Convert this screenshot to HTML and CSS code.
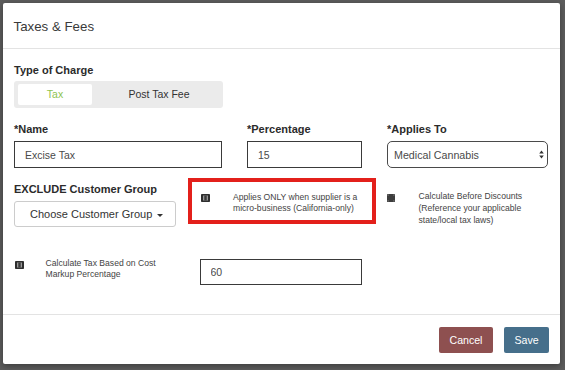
FILE: index.html
```html
<!DOCTYPE html>
<html>
<head>
<meta charset="utf-8">
<link rel="stylesheet" href="styles.css">
</head>
<body>
<div class="modal">
  <div class="modal-header">
    <h4 class="title">Taxes &amp; Fees</h4>
  </div>
  <div class="modal-body">
    <div class="label">Type of Charge</div>
    <div class="seg">
      <span class="seg-item active">Tax</span>
      <span class="seg-item other">Post Tax Fee</span>
    </div>

    <div class="fields">
      <div class="field f-name">
        <div class="label">*Name</div>
        <input class="text-input" type="text" value="Excise Tax">
      </div>
      <div class="field f-pct">
        <div class="label">*Percentage</div>
        <input class="text-input" type="text" value="15">
      </div>
      <div class="field f-applies">
        <div class="label">*Applies To</div>
        <div class="select">
          <span>Medical Cannabis</span>
          <svg class="updown" width="5" height="9" viewBox="0 0 5 9"><path d="M2.5 0.5 L4.8 3.6 L0.2 3.6 Z M0.2 5.4 L4.8 5.4 L2.5 8.5 Z" fill="#333"/></svg>
        </div>
      </div>
    </div>

    <div class="options">
      <div class="exclude">
        <div class="label">EXCLUDE Customer Group</div>
        <button class="dropdown">Choose Customer Group <span class="caret"></span></button>
      </div>
      <div class="highlight">
        <svg class="cb" width="9" height="8" viewBox="0 0 9 8"><rect x="0" y="0" width="9" height="8" rx="0.8" fill="#2e2e2e"/><rect x="2" y="1.5" width="5" height="5" fill="#9a9a9a"/><rect x="3.3" y="1.5" width="2.4" height="5" fill="#3a3a3a"/></svg>
        <span class="small-text">Applies ONLY when supplier is a<br>micro-business (California-only)</span>
      </div>
      <div class="opt">
        <svg class="cb cb-filled" width="8" height="8" viewBox="0 0 8 8"><rect x="0" y="0" width="8" height="8" rx="0.6" fill="#3d3d3d"/><rect x="0.6" y="0.6" width="1" height="1" fill="#9a9a9a"/><rect x="6.4" y="0.6" width="1" height="1" fill="#9a9a9a"/><rect x="0.6" y="6.4" width="1" height="1" fill="#9a9a9a"/><rect x="6.4" y="6.4" width="1" height="1" fill="#9a9a9a"/></svg>
        <span class="small-text">Calculate Before Discounts<br>(Reference your applicable<br>state/local tax laws)</span>
      </div>
    </div>

    <div class="markup">
      <svg class="cb" width="9" height="8" viewBox="0 0 9 8"><rect x="0" y="0" width="9" height="8" rx="0.8" fill="#2e2e2e"/><rect x="2" y="1.5" width="5" height="5" fill="#9a9a9a"/><rect x="3.3" y="1.5" width="2.4" height="5" fill="#3a3a3a"/></svg>
      <span class="small-text markup-text">Calculate Tax Based on Cost<br>Markup Percentage</span>
      <input class="text-input markup-input" type="text" value="60">
    </div>
  </div>
  <div class="modal-footer">
    <button class="btn cancel">Cancel</button>
    <button class="btn save">Save</button>
  </div>
</div>
</body>
</html>
```

FILE: styles.css
```css
html, body {
  margin: 0;
  padding: 0;
}
body {
  background: #5c5c5c;
  font-family: "Liberation Sans", Arial, sans-serif;
  color: #333;
  width: 565px;
  height: 370px;
  overflow: hidden;
}
.modal {
  margin: 3px 0 0 3px;
  width: 557px;
  height: 361px;
  background: #fff;
  display: flex;
  flex-direction: column;
  border-radius: 2px;
  box-shadow: 0 2px 6px rgba(0,0,0,0.35);
}
.modal-header {
  box-sizing: border-box;
  height: 46px;
  border-bottom: 1px solid #e3e3e3;
  display: flex;
  align-items: center;
  padding: 2px 0 0 10.5px;
}
.title {
  margin: 0;
  font-size: 13.3px;
  font-weight: normal;
  color: #3a3a3a;
}
.modal-body {
  flex: 1;
  padding: 14px 0 0 11px;
}
.label {
  font-size: 11px;
  font-weight: bold;
  line-height: 14px;
  color: #2b2b2b;
}
.seg {
  margin-top: 4px;
  box-sizing: border-box;
  width: 209px;
  height: 27px;
  background: #ebebeb;
  border-radius: 3px;
  padding: 3px 4px;
  display: flex;
}
.seg-item {
  flex: none;
  font-size: 10.5px;
  line-height: 21px;
  text-align: center;
  color: #333;
}
.seg-item.active {
  width: 74px;
  background: #fff;
  border-radius: 2px;
  color: #8dc450;
}
.seg-item.other {
  width: 134px;
}
.fields {
  display: flex;
  gap: 25px;
  margin-top: 14px;
}
.field .label {
  margin-bottom: 5px;
}
.f-name { width: 208px; }
.f-pct { width: 115px; }
.f-applies { width: 161px; }
.text-input {
  display: block;
  box-sizing: border-box;
  width: 100%;
  height: 27px;
  margin: 0;
  border: 1px solid #3a3a3a;
  border-radius: 0;
  padding: 0 10px;
  font-family: "Liberation Sans", Arial, sans-serif;
  font-size: 10.5px;
  color: #4a4a4a;
  outline: none;
  background: #fff;
}
.select {
  box-sizing: border-box;
  height: 27px;
  border: 1px solid #4a4a4a;
  border-radius: 5px;
  display: flex;
  align-items: center;
  justify-content: space-between;
  padding: 0 3px 0 6px;
  font-size: 10.7px;
  color: #4a4a4a;
}
.updown {
  display: block;
}
.options {
  display: flex;
  align-items: flex-start;
  margin-top: 10px;
}
.exclude {
  width: 174px;
  flex: none;
  padding-top: 4px;
}
.dropdown {
  display: block;
  margin-top: 5px;
  box-sizing: border-box;
  width: 162px;
  height: 26px;
  background: #fff;
  border: 1px solid #cccccc;
  border-radius: 3px;
  padding: 0 0 0 15px;
  text-align: left;
  font-family: "Liberation Sans", Arial, sans-serif;
  font-size: 11px;
  color: #333;
}
.caret {
  display: inline-block;
  width: 0;
  height: 0;
  margin-left: 2px;
  vertical-align: middle;
  border-top: 3.5px solid #333;
  border-left: 3px solid transparent;
  border-right: 3px solid transparent;
}
.highlight {
  box-sizing: border-box;
  width: 188px;
  height: 46px;
  flex: none;
  border: 4px solid #e3201b;
  display: flex;
  align-items: flex-start;
  padding: 9.5px 0 0 8.5px;
}
.cb {
  display: block;
  flex: none;
}
.highlight .cb {
  margin-top: 2.5px;
  margin-right: 23.5px;
}
.small-text {
  font-size: 8.6px;
  line-height: 11.8px;
  color: #444;
  white-space: nowrap;
}
.opt {
  margin-left: 11px;
  display: flex;
  align-items: flex-start;
  padding-top: 13.4px;
}
.opt .cb {
  margin-top: 2.6px;
  margin-right: 23.5px;
}
.markup {
  display: flex;
  align-items: flex-start;
  margin-top: 30.5px;
}
.markup .cb {
  margin-top: 3px;
  margin-left: 0.5px;
  margin-right: 22px;
}
.markup-text {
  width: 154px;
  flex: none;
  line-height: 11.5px;
}
.markup-input {
  width: 162px;
  height: 26px;
  margin-top: 1.5px;
}
.modal-footer {
  border-top: 1px solid #e3e3e3;
  display: flex;
  justify-content: flex-end;
  gap: 11px;
  padding: 12px 11px 0 0;
  height: 50px;
  box-sizing: border-box;
}
.btn {
  height: 26px;
  border: none;
  border-radius: 2px;
  color: #fff;
  font-family: "Liberation Sans", Arial, sans-serif;
  font-size: 10.6px;
  padding: 0;
}
.cancel {
  width: 54px;
  background: #8e5050;
}
.save {
  width: 45px;
  background: #466f8b;
}
```
